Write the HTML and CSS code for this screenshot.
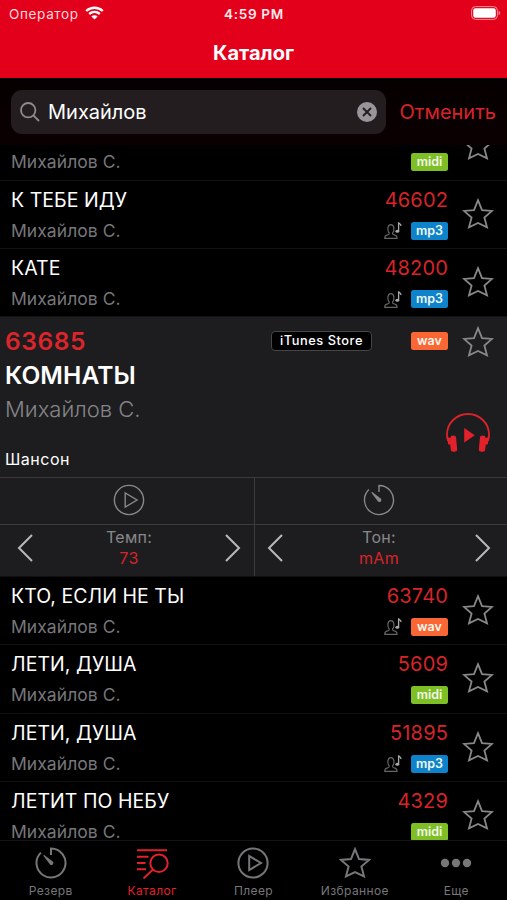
FILE: index.html
```html
<!DOCTYPE html>
<html lang="ru">
<head>
<meta charset="UTF-8">
<title>Каталог</title>
<link rel="stylesheet" href="styles.css">
</head>
<body>

<!-- Общие иконки -->
<svg class="sprite" aria-hidden="true">
  <symbol id="star" viewBox="0 0 32 32">
    <path d="M16 2.2 L20 12.1 L30 12.9 L22.4 19.6 L25 29.3 L16 25 L7 29.3 L9.6 19.6 L2 12.9 L12 12.1 Z"/>
  </symbol>
  <symbol id="timer" viewBox="0 0 32 32">
    <path d="M16 8 V1.5 A14.5 14.5 0 1 1 5.9 5.6"/>
    <path class="fill" d="M8.2 8.6 L9.2 8 L17.8 14.6 A1.9 1.9 0 0 1 15 17.4 Z"/>
  </symbol>
  <symbol id="play" viewBox="0 0 32 32">
    <circle cx="16" cy="16" r="14.6"/>
    <path d="M12.2 9 V23 L24 16 Z"/>
  </symbol>
  <symbol id="singer" viewBox="0 0 18 19">
    <path class="person" d="M5.2 12 C3.2 9.6 3.2 3.6 6.9 3.6 C10.6 3.6 10.6 9.6 8.6 12 C8.4 13.6 9 13.7 11 14.2 C12.8 14.6 13 15.8 13 17.4 H.8 C.8 15.8 1 14.6 2.8 14.2 C4.8 13.7 5.4 13.6 5.2 12 Z"/>
    <path class="note" d="M14.6 10.2 V1.2 C14.8 3 17 2.6 17 5"/>
    <ellipse class="note-head" cx="13.3" cy="10.3" rx="1.9" ry="1.5"/>
  </symbol>
</svg>

<header class="header">
  <div class="status">
    <div class="operator">
      <span>Оператор</span>
      <svg class="wifi" viewBox="0 0 19 14">
        <path d="M1.2 5 C5.8 .6 13.2 .6 17.8 5 M4.2 8 C7.2 5.2 11.8 5.2 14.8 8"/>
        <path class="wifi-dot" d="M9.5 13.6 L6.4 10.4 C8.1 8.9 10.9 8.9 12.6 10.4 Z"/>
      </svg>
    </div>
    <div class="clock">4:59 PM</div>
    <svg class="battery" viewBox="0 0 30 14">
      <rect x=".6" y=".6" width="25.8" height="12.8" rx="3.8"/>
      <rect class="charge" x="2.2" y="2.2" width="22.6" height="9.6" rx="2.2"/>
      <path class="cap" d="M27.6 4.8 C29.8 5.6 29.8 8.4 27.6 9.2 Z"/>
    </svg>
  </div>
  <h1>Каталог</h1>
</header>

<div class="search">
  <div class="field">
    <svg class="lens" viewBox="0 0 20 20"><circle cx="8.2" cy="8.2" r="7.2"/><path d="M13.4 13.4 L19 19"/></svg>
    <span class="query">Михайлов</span>
    <svg class="clear" viewBox="0 0 20 20"><circle cx="10" cy="10" r="10"/><path d="M6 6 L14 14 M14 6 L6 14"/></svg>
  </div>
  <span class="cancel">Отменить</span>
</div>

<main class="list">
  <!-- Строка прокручена под строку поиска -->
  <div class="row first">
    <div class="song"><div class="title"></div><div class="artist">Михайлов С.</div></div>
    <div class="info"><div class="number"></div><div class="tags"><span class="badge midi">midi</span></div></div>
    <svg class="star"><use href="#star"/></svg>
  </div>
  <div class="row">
    <div class="song"><div class="title">К ТЕБЕ ИДУ</div><div class="artist">Михайлов С.</div></div>
    <div class="info"><div class="number">46602</div><div class="tags"><svg class="singer"><use href="#singer"/></svg><span class="badge mp3">mp3</span></div></div>
    <svg class="star"><use href="#star"/></svg>
  </div>
  <div class="row">
    <div class="song"><div class="title">КАТЕ</div><div class="artist">Михайлов С.</div></div>
    <div class="info"><div class="number">48200</div><div class="tags"><svg class="singer"><use href="#singer"/></svg><span class="badge mp3">mp3</span></div></div>
    <svg class="star"><use href="#star"/></svg>
  </div>

  <!-- Раскрытая песня -->
  <section class="detail">
    <div class="about">
      <div class="top">
        <div class="big-number">63685</div>
        <span class="itunes">iTunes Store</span>
        <span class="badge wav">wav</span>
        <svg class="star"><use href="#star"/></svg>
      </div>
      <div class="big-title">КОМНАТЫ</div>
      <div class="big-artist">Михайлов С.</div>
      <div class="bottom">
        <span class="genre">Шансон</span>
        <svg class="listen" viewBox="0 0 44 40">
          <path class="band" d="M2 28 C1.2 26 1 24 1 21.5 A21 20.5 0 0 1 43 21.5 C43 24 42.8 26 42 28"/>
          <path d="M1.2 24 L4.6 25 L5 23 Q9.4 21.6 10 24 L11.2 36.5 Q11.2 38.6 9 38.8 H7 Q5 38.8 4.8 36.8 L4.2 31.5 H2.2 Z"/>
          <path d="M42.8 24 L39.4 25 L39 23 Q34.6 21.6 34 24 L32.8 36.5 Q32.8 38.6 35 38.8 H37 Q39 38.8 39.2 36.8 L39.8 31.5 H41.8 Z"/>
          <path d="M18.2 15 V29.5 L28.8 22.2 Z"/>
        </svg>
      </div>
    </div>
    <div class="controls">
      <div class="cell"><svg class="control-icon"><use href="#play"/></svg></div>
      <div class="cell"><svg class="control-icon shifted"><use href="#timer"/></svg></div>
      <div class="cell stepper">
        <svg class="arrow" viewBox="0 0 16 28"><path d="M15 1 L2 14 L15 27"/></svg>
        <div class="value"><span>Темп:</span><b>73</b></div>
        <svg class="arrow" viewBox="0 0 16 28"><path d="M1 1 L14 14 L1 27"/></svg>
      </div>
      <div class="cell stepper tone">
        <svg class="arrow" viewBox="0 0 16 28"><path d="M15 1 L2 14 L15 27"/></svg>
        <div class="value"><span>Тон:</span><b>mAm</b></div>
        <svg class="arrow" viewBox="0 0 16 28"><path d="M1 1 L14 14 L1 27"/></svg>
      </div>
    </div>
  </section>

  <div class="row">
    <div class="song"><div class="title">КТО, ЕСЛИ НЕ ТЫ</div><div class="artist">Михайлов С.</div></div>
    <div class="info"><div class="number">63740</div><div class="tags"><svg class="singer"><use href="#singer"/></svg><span class="badge wav">wav</span></div></div>
    <svg class="star"><use href="#star"/></svg>
  </div>
  <div class="row">
    <div class="song"><div class="title">ЛЕТИ, ДУША</div><div class="artist">Михайлов С.</div></div>
    <div class="info"><div class="number">5609</div><div class="tags"><span class="badge midi">midi</span></div></div>
    <svg class="star"><use href="#star"/></svg>
  </div>
  <div class="row">
    <div class="song"><div class="title">ЛЕТИ, ДУША</div><div class="artist">Михайлов С.</div></div>
    <div class="info"><div class="number">51895</div><div class="tags"><svg class="singer"><use href="#singer"/></svg><span class="badge mp3">mp3</span></div></div>
    <svg class="star"><use href="#star"/></svg>
  </div>
  <div class="row">
    <div class="song"><div class="title">ЛЕТИТ ПО НЕБУ</div><div class="artist">Михайлов С.</div></div>
    <div class="info"><div class="number">4329</div><div class="tags"><span class="badge midi">midi</span></div></div>
    <svg class="star"><use href="#star"/></svg>
  </div>
</main>

<nav class="tabs">
  <div class="tab"><svg><use href="#timer"/></svg><span>Резерв</span></div>
  <div class="tab active">
    <svg viewBox="0 0 32 32"><path d="M1 3.2 H31 M1 9.7 H12.5 M1 16 H9.5 M1 22.2 H10 M16.8 22.8 L7.5 31.5"/><circle cx="23" cy="16.2" r="8.7"/></svg>
    <span>Каталог</span>
  </div>
  <div class="tab"><svg><use href="#play"/></svg><span>Плеер</span></div>
  <div class="tab"><svg><use href="#star"/></svg><span>Избранное</span></div>
  <div class="tab">
    <svg viewBox="0 0 32 32"><circle class="dot" cx="5" cy="16" r="4.2"/><circle class="dot" cx="16" cy="16" r="4.2"/><circle class="dot" cx="27" cy="16" r="4.2"/></svg>
    <span>Еще</span>
  </div>
</nav>

</body>
</html>
```
FILE: styles.css
```css
* {
  box-sizing: border-box;
}
body {
  margin: 0;
  height: 900px;
  display: flex;
  flex-direction: column;
  overflow: hidden;
  background-color: #000;
  color: #fff;
  font-family: Inter, "Liberation Sans", sans-serif;
  white-space: nowrap;
}
svg {
  display: block;
  fill: none;
  flex: none;
}
.sprite {
  position: absolute;
  width: 0;
  height: 0;
}

/* Шапка */
.header {
  height: 78px;
  flex: none;
  background-color: #e3001b;
}
.status {
  display: grid;
  grid-template-columns: 1fr auto 1fr;
  align-items: center;
  height: 28px;
  padding: 0 6px 0 9px;
  font-size: 13.5px;
}
.operator {
  display: flex;
  align-items: center;
  gap: 6px;
  color: #ffd9dc;
  letter-spacing: 0.65px;
}
.wifi {
  width: 19px;
  height: 14px;
  margin-top: -2px;
  stroke: #fff;
  stroke-width: 2.4;
}
.wifi-dot {
  fill: #fff;
  stroke: none;
}
.clock {
  font-weight: 600;
  letter-spacing: 0.7px;
  margin-right: 2px;
  color: #ffeaec;
}
.battery {
  justify-self: end;
  width: 30px;
  height: 14px;
  margin-top: -2px;
  stroke: #f5929b;
}
.charge {
  fill: #fff;
  stroke: none;
}
.cap {
  fill: #f5929b;
  stroke: none;
}
h1 {
  margin: 0;
  text-align: center;
  font-size: 20px;
  line-height: 50px;
  font-weight: 700;
}

/* Поиск */
.search {
  display: flex;
  align-items: center;
  height: 67px;
  flex: none;
  padding: 0 11px;
  background: linear-gradient(#050001, #0b0001);
}
.field {
  display: flex;
  align-items: center;
  width: 375px;
  height: 44px;
  padding: 0 9px;
  border-radius: 11px;
  background-color: #231d1f;
  font-size: 20px;
}
.lens {
  width: 20px;
  height: 20px;
  stroke: #8f8b8e;
  stroke-width: 1.8;
}
.query {
  flex: 1;
  margin-left: 8px;
}
.clear {
  width: 20px;
  height: 20px;
  fill: #98969a;
  stroke: #231d1f;
}
.clear circle {
  stroke: none;
}
.clear path {
  stroke-width: 1.9;
}
.cancel {
  margin-left: 14px;
  font-size: 20px;
  color: #d8232a;
}

/* Список песен */
.list {
  flex: 1;
  min-height: 0;
  overflow: hidden;
}
.row {
  display: flex;
  height: 68.4px;
  padding: 0 13px 0 11px;
  border-bottom: 1px solid #121212;
}
.first {
  margin-top: -32.7px;
}
.song {
  flex: 1;
}
.title {
  height: 38px;
  font-size: 19.5px;
  line-height: 38px;
  letter-spacing: 0.05px;
}
.artist {
  font-size: 17.5px;
  line-height: 24px;
  letter-spacing: 0.05px;
  color: #77777a;
}
.info {
  margin-right: 14px;
  text-align: right;
}
.number {
  height: 38px;
  font-size: 20px;
  line-height: 38px;
  letter-spacing: 0.15px;
  color: #d8232a;
}
.tags {
  display: flex;
  justify-content: flex-end;
  align-items: center;
  height: 24px;
  gap: 9px;
}
.badge {
  width: 37px;
  height: 18px;
  border-radius: 2.5px;
  text-align: center;
  font-size: 12.5px;
  line-height: 17px;
  font-weight: 600;
  color: #f3f8ee;
}
.midi {
  background-color: #7fbf26;
}
.mp3 {
  background-color: #0d83cb;
}
.wav {
  background-color: #fb6635;
}
.singer {
  width: 18px;
  height: 19px;
}
.person {
  stroke: #666;
  stroke-width: 1.2;
}
.note {
  stroke: #aaa;
  stroke-width: 1.3;
}
.note-head {
  fill: #aaa;
}
.star {
  width: 32px;
  height: 32px;
  margin-top: 17px;
  stroke: #88888a;
  stroke-width: 1.8;
}

/* Раскрытая песня */
.detail {
  height: 259.4px;
  background-color: #1d1d1f;
  border-bottom: 1px solid #101010;
}
.about {
  height: 159.4px;
  padding: 0 13px 0 5px;
}
.top {
  display: flex;
  align-items: center;
  height: 47px;
}
.top .badge {
  margin-top: 1px;
}
.top .star {
  margin: 2px 0 0 14px;
}
.big-number {
  flex: 1;
  font-size: 24.5px;
  font-weight: 600;
  letter-spacing: 0.6px;
  color: #dc242b;
}
.itunes {
  width: 101px;
  height: 20px;
  margin-right: 39px;
  border: 1px solid #464648;
  border-radius: 4px;
  background-color: #000;
  text-align: center;
  font-size: 12.8px;
  line-height: 17px;
  font-weight: 500;
  letter-spacing: 0.55px;
}
.big-title {
  font-size: 24.5px;
  line-height: 22px;
  font-weight: 600;
  letter-spacing: 0.1px;
}
.big-artist {
  margin-top: 7px;
  font-size: 22px;
  line-height: 32px;
  font-weight: 300;
  color: #858588;
}
.bottom {
  display: flex;
  justify-content: space-between;
  margin-top: -13px;
  padding-right: 4px;
}
.genre {
  margin-top: 37px;
  font-size: 16px;
  line-height: 20px;
  letter-spacing: 0.5px;
}
.listen {
  width: 44px;
  height: 40px;
  margin-top: 1px;
  fill: #e3212a;
}
.band {
  fill: none;
  stroke: #d8232a;
  stroke-width: 1.8;
}
.controls {
  display: grid;
  grid-template-columns: 254px 1fr;
  grid-template-rows: 47px 52px;
}
.cell {
  display: flex;
  align-items: center;
  justify-content: center;
  border-top: 1px solid #3b3b3d;
}
.cell:nth-child(even) {
  border-left: 1px solid #3b3b3d;
}
.control-icon {
  width: 32px;
  height: 32px;
  margin-left: 4px;
  margin-top: -1px;
  stroke: #88888a;
  stroke-width: 1.4;
}
.shifted {
  margin-left: -4px;
}
.stepper {
  justify-content: space-between;
  padding: 0 13px 5px 17px;
}
.tone {
  padding: 0 16px 5px 12px;
}
.arrow {
  width: 16px;
  height: 28px;
  stroke: #b9b9bb;
  stroke-width: 2;
}
.value {
  display: flex;
  flex-direction: column;
  align-items: center;
  font-size: 16px;
  line-height: 21px;
  letter-spacing: 0.3px;
  color: #88888a;
}
.value b {
  font-weight: 400;
  color: #d8232a;
}
.fill {
  fill: currentColor;
  stroke: none;
}
.control-icon {
  color: #88888a;
}

/* Нижнее меню */
.tabs {
  display: grid;
  grid-template-columns: repeat(5, 1fr);
  height: 60px;
  flex: none;
  border-top: 1px solid #141414;
}
.tab {
  display: flex;
  flex-direction: column;
  align-items: center;
  padding-top: 6px;
  font-size: 12px;
  line-height: 20px;
  letter-spacing: 0.4px;
  color: #77777a;
}
.tab svg {
  width: 32px;
  height: 32px;
  margin-bottom: 2px;
  stroke: currentColor;
  stroke-width: 2;
  overflow: visible;
}
.tab .dot {
  fill: currentColor;
  stroke: none;
}
.tab.active {
  color: #e3212a;
}
```
